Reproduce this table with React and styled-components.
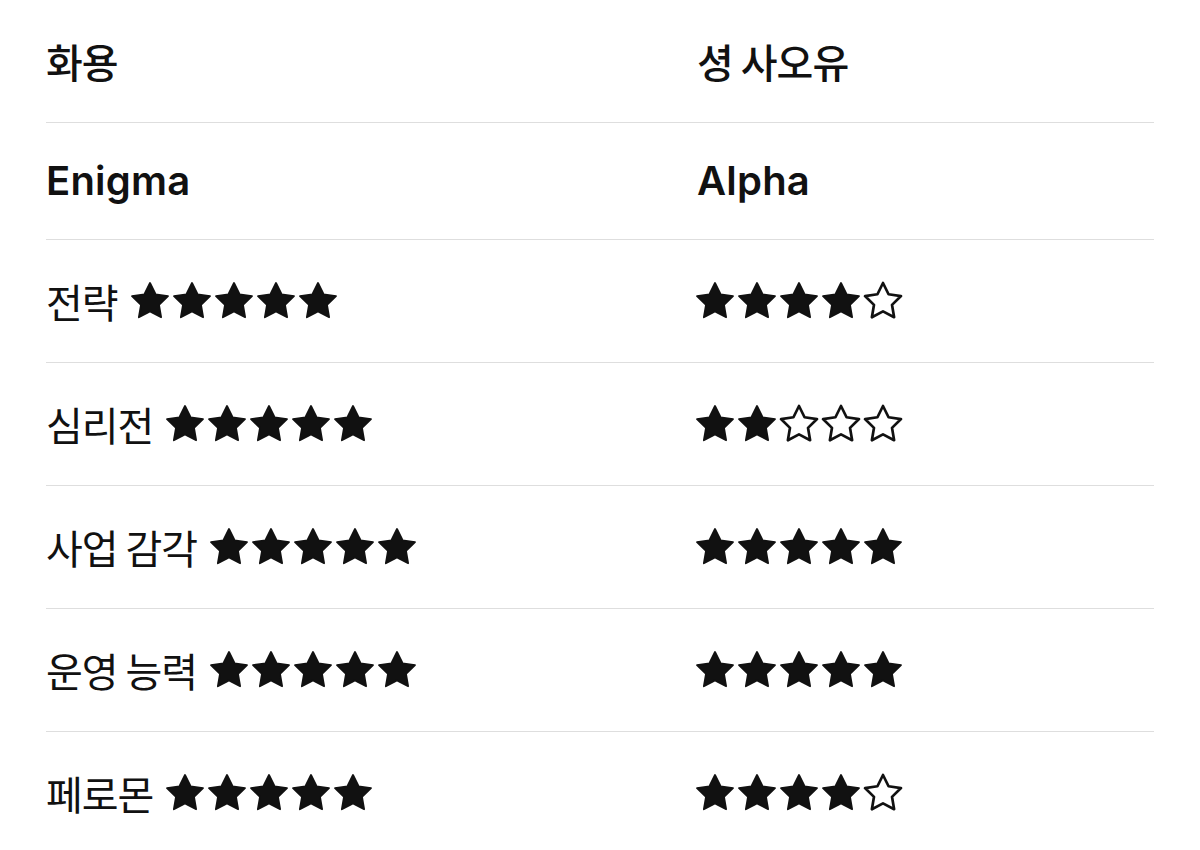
import React from 'react';
import styled, {createGlobalStyle} from 'styled-components';

const GlobalStyle = createGlobalStyle`
  body {
    margin: 0;
    background: #ffffff;
    font-family: "Inter", "Noto Sans CJK KR", sans-serif;
    color: #111111;
  }
`;

const Page = styled.div`
  padding: 0 46px;
  width: 1108px;
`;

const Row = styled.div`
  display: grid;
  grid-template-columns: 651px 1fr;
  align-items: center;
  height: ${props => props.h}px;
  border-bottom: ${props => (props.last ? 'none' : '1px solid #dedede')};
`;

const Cell = styled.div`
  display: flex;
  align-items: center;
  gap: 14px;
  font-size: 40px;
  font-weight: ${props => props.weight || 400};
  font-family: ${props => (props.latin ? '"Inter", "Noto Sans CJK KR", sans-serif' : '"Noto Sans CJK KR", sans-serif')};
  letter-spacing: ${props => (props.latin ? '0.2px' : '-1px')};
  line-height: 1;
`;

const Stars = styled.span`
  display: inline-flex;
  gap: 6px;
`;

const StarSvg = styled.svg`
  width: 36px;
  height: 36px;
  overflow: visible;
  display: block;
`;

const STAR = '12,2 15.09,8.26 22,9.27 17,14.14 18.18,21.02 12,17.77 5.82,21.02 7,14.14 2,9.27 8.91,8.26';

const Star = ({filled}) => (
    <StarSvg viewBox="2 2 20 20">
        {filled
            ? <polygon points={STAR} fill="#111" stroke="#111" strokeWidth="1" strokeLinejoin="round"/>
            : <polygon points={STAR} fill="none" stroke="#111" strokeWidth="1.5" strokeLinejoin="round"/>}
    </StarSvg>
);

const Rating = ({value}) => (
    <Stars>
        {[0, 1, 2, 3, 4].map(i => <Star key={i} filled={i < value}/>)}
    </Stars>
);

const rows = [
    {label: '전략', left: 5, right: 4},
    {label: '심리전', left: 5, right: 2},
    {label: '사업 감각', left: 5, right: 5},
    {label: '운영 능력', left: 5, right: 5},
    {label: '페로몬', left: 5, right: 4},
];

const App = () => {
    return (
        <Page>
            <GlobalStyle/>
            <Row h={122}>
                <Cell weight={500}>화용</Cell>
                <Cell weight={500}>셩 사오유</Cell>
            </Row>
            <Row h={116}>
                <Cell weight={600} latin>Enigma</Cell>
                <Cell weight={600} latin>Alpha</Cell>
            </Row>
            {rows.map((r, i) => (
                <Row key={r.label} h={122} last={i === rows.length - 1}>
                    <Cell>
                        {r.label}
                        <Rating value={r.left}/>
                    </Cell>
                    <Cell>
                        <Rating value={r.right}/>
                    </Cell>
                </Row>
            ))}
        </Page>
    );
};

export default App;
